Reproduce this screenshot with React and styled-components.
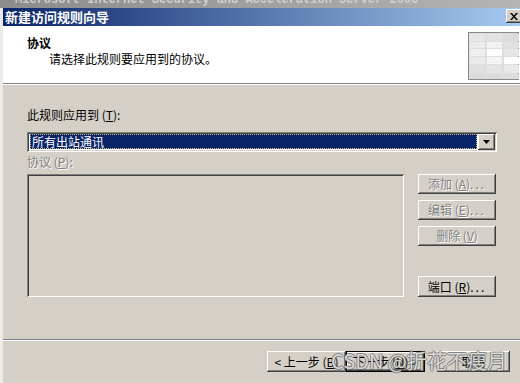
import React from "react";
import styled, { createGlobalStyle } from "styled-components";

const Global = createGlobalStyle`
  html, body { margin: 0; padding: 0; background: #d4d0c8; }
  * { box-sizing: border-box; }
`;

const raised = `
  box-shadow: inset -1px -1px #404040, inset 1px 1px #ffffff, inset -2px -2px #808080, inset 2px 2px #d4d0c8;
`;
const sunken = `
  box-shadow: inset 1px 1px #808080, inset -1px -1px #ffffff, inset 2px 2px #404040, inset -2px -2px #d4d0c8;
`;

const Root = styled.div`
  width: 520px;
  height: 383px;
  overflow: hidden;
  position: relative;
  background: #d4d0c8;
  display: flex;
  flex-direction: column;
  font-family: "Noto Sans CJK SC", "Liberation Sans", sans-serif;
  font-size: 12px;
  color: #000;
`;

const TopStrip = styled.div`
  height: 8px;
  flex: none;
  overflow: hidden;
  background: linear-gradient(to right, #8c8c8c, #b4b4b4);
  padding-left: 15px;
`;

const TopText = styled.div`
  font-family: "Liberation Mono", monospace;
  font-weight: bold;
  font-size: 12px;
  line-height: 12px;
  margin-top: -6px;
  color: #cfcfcf;
  white-space: nowrap;
`;

const Frame = styled.div`
  flex: 1;
  display: flex;
  flex-direction: column;
  border-left: 3px solid #ecebe6;
`;

const TitleBar = styled.div`
  height: 18px;
  flex: none;
  display: flex;
  align-items: flex-start;
  justify-content: space-between;
  background: linear-gradient(to right, #0a246a, #a6caf0);
  padding-left: 2px;
`;

const TitleText = styled.div`
  color: #fff;
  font-weight: bold;
  font-size: 13px;
  line-height: 18px;
`;

const CloseBtn = styled.div`
  width: 16px;
  height: 14px;
  margin-top: 1px;
  margin-right: -2px;
  background: #d4d0c8;
  ${raised}
  display: flex;
  align-items: center;
  justify-content: center;
`;

const Header = styled.div`
  height: 57px;
  flex: none;
  background: #fff;
  display: flex;
  justify-content: space-between;
  align-items: flex-start;
`;

const HeaderText = styled.div`
  padding: 10px 0 0 24px;
`;

const HeaderTitle = styled.div`
  font-weight: bold;
  line-height: 14px;
`;

const HeaderSub = styled.div`
  line-height: 14px;
  margin-top: 2px;
  padding-left: 22px;
`;

const HeaderIcon = styled.svg`
  margin-top: 6px;
  margin-right: 1px;
  flex: none;
`;

const Separator = styled.div`
  height: 2px;
  flex: none;
  border-top: 1px solid #808080;
  border-bottom: 1px solid #ffffff;
`;

const Body = styled.div`
  height: 254px;
  flex: none;
  padding: 23px 0 0 24px;
  display: flex;
  flex-direction: column;
`;

const Label = styled.div`
  line-height: 14px;
  height: 14px;
  color: ${(p) => (p.$disabled ? "#808080" : "#000")};
  text-shadow: ${(p) => (p.$disabled ? "1px 1px 0 #fff" : "none")};
  margin-top: ${(p) => p.$mt || 0}px;
`;

const Combo = styled.div`
  margin-top: 10px;
  width: 470px;
  height: 20px;
  background: #fff;
  ${sunken}
  padding: 2px;
  display: flex;
`;

const ComboValue = styled.div`
  flex: 1;
  margin: 0 1px 1px 1px;
  background: #0a246a;
  color: #fff;
  outline: 1px dotted #c8c080;
  outline-offset: -1px;
  line-height: 15px;
  padding-left: 2px;
`;

const DropBtn = styled.div`
  width: 17px;
  height: 16px;
  background: #d4d0c8;
  ${raised}
  display: flex;
  align-items: center;
  justify-content: center;
`;

const ListRow = styled.div`
  margin-top: 5px;
  display: flex;
  gap: 14px;
`;

const ListBox = styled.div`
  width: 377px;
  height: 123px;
  background: #d4d0c8;
  ${sunken}
`;

const ButtonCol = styled.div`
  width: 78px;
  height: 123px;
  display: flex;
  flex-direction: column;
  gap: 6px;
`;

const Btn = styled.div`
  width: ${(p) => p.$w || 78}px;
  height: ${(p) => p.$h || 20}px;
  flex: none;
  background: #d4d0c8;
  ${raised}
  display: flex;
  align-items: center;
  justify-content: center;
  line-height: 14px;
  white-space: nowrap;
  color: ${(p) => (p.$disabled ? "#808080" : "#000")};
  text-shadow: ${(p) => (p.$disabled ? "1px 1px 0 #fff" : "none")};
  margin-top: ${(p) => (p.$pushDown ? "auto" : "0")};
  margin-left: ${(p) => p.$ml || 0}px;
`;

const DefaultBtn = styled(Btn)`
  box-shadow: inset 0 0 0 1px #000, inset -2px -2px #404040, inset 2px 2px #ffffff, inset -3px -3px #808080;
`;

const Footer = styled.div`
  display: flex;
  justify-content: flex-end;
  padding: 10px 10px 0 0;
`;

const Dots = styled.span`
  letter-spacing: 2px;
`;

const Watermark = styled.div`
  position: absolute;
  left: 331px;
  top: 348px;
  font-size: 20px;
  line-height: 26px;
  color: rgba(255, 255, 255, 0.8);
  text-shadow: 1px 0 rgba(70, 70, 70, 0.55), -1px 0 rgba(70, 70, 70, 0.55),
    0 1px rgba(70, 70, 70, 0.55), 0 -1px rgba(70, 70, 70, 0.55);
  white-space: nowrap;
  pointer-events: none;
`;

function WizardIcon() {
  const cols = [0, 17, 34];
  const rows = [0, 8, 15, 23, 31, 40];
  const fills = [
    ["#e6e6e6", "#e2e2e2", "#dcdcdc"],
    ["#ececec", "#f2f2f2", "#e0e0e0"],
    ["#f0f0f0", "#ffffff", "#e6e6e6"],
    ["#ebebeb", "#f4f4f4", "#ffffff"],
    ["#e0e0e0", "#e4e4e4", "#e8e8e8"],
    ["#dadada", "#dadada", "#dcdcdc"],
  ];
  return (
    <HeaderIcon width="51" height="48" viewBox="0 0 51 48">
      <rect x="0.5" y="0.5" width="50" height="47" fill="#dedede" stroke="#8a8a8a" />
      {rows.map((y, ri) =>
        cols.map((x, ci) => (
          <rect
            key={`${ri}-${ci}`}
            x={x + 2}
            y={y + 2}
            width={15}
            height={(rows[ri + 1] || 46) - y - 1}
            fill={fills[ri][ci]}
          />
        ))
      )}
    </HeaderIcon>
  );
}

export default function App() {
  return (
    <Root>
      <Global />
      <TopStrip>
        <TopText>Microsoft Internet Security and Acceleration Server 2006</TopText>
      </TopStrip>
      <Frame>
        <TitleBar>
          <TitleText>新建访问规则向导</TitleText>
          <CloseBtn>
            <svg width="8" height="7" viewBox="0 0 8 7">
              <path d="M0 0h2l2 2.5L6 0h2L5 3.5 8 7H6L4 4.5 2 7H0l3-3.5z" fill="#000" />
            </svg>
          </CloseBtn>
        </TitleBar>
        <Header>
          <HeaderText>
            <HeaderTitle>协议</HeaderTitle>
            <HeaderSub>请选择此规则要应用到的协议。</HeaderSub>
          </HeaderText>
          <WizardIcon />
        </Header>
        <Separator />
        <Body>
          <Label>
            此规则应用到 (<u>T</u>):
          </Label>
          <Combo>
            <ComboValue>所有出站通讯</ComboValue>
            <DropBtn>
              <svg width="7" height="4" viewBox="0 0 7 4">
                <path d="M0 0h7L3.5 4z" fill="#000" />
              </svg>
            </DropBtn>
          </Combo>
          <Label $disabled $mt={3}>
            协议 (<u>P</u>):
          </Label>
          <ListRow>
            <ListBox />
            <ButtonCol>
              <Btn $disabled>
                添加 (<u>A</u>)<Dots>...</Dots>
              </Btn>
              <Btn $disabled>
                编辑 (<u>E</u>)<Dots>...</Dots>
              </Btn>
              <Btn $disabled>
                删除 (<u>V</u>)
              </Btn>
              <Btn $pushDown $h={21}>
                端口 (<u>R</u>)<Dots>...</Dots>
              </Btn>
            </ButtonCol>
          </ListRow>
        </Body>
        <Separator />
        <Footer>
          <Btn $w={79} $h={21}>
            &lt; 上一步 (<u>B</u>)
          </Btn>
          <DefaultBtn $w={79} $h={21}>
            下一步 (<u>N</u>) &gt;
          </DefaultBtn>
          <Btn $w={73} $h={21} $ml={12}>
            取消
          </Btn>
        </Footer>
      </Frame>
      <Watermark>CSDN @折花不瘦月</Watermark>
    </Root>
  );
}
